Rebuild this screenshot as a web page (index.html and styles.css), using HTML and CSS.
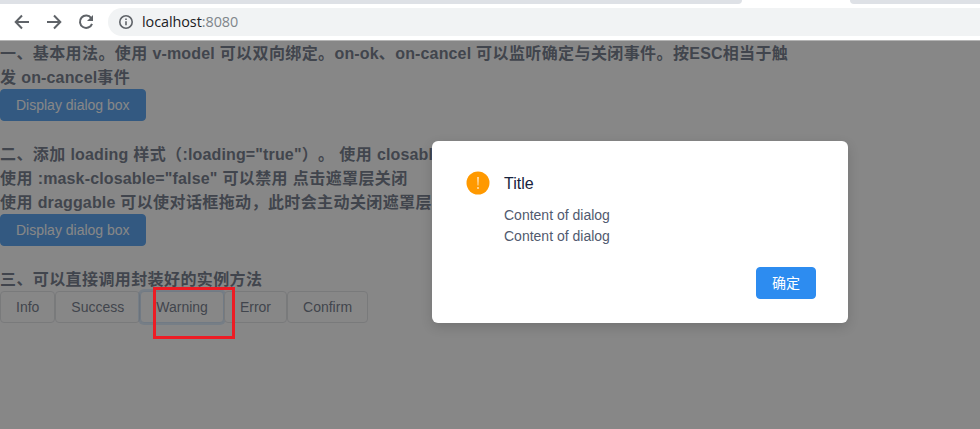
FILE: index.html
```html
<!DOCTYPE html>
<html lang="zh-CN">
<head>
<meta charset="utf-8">
<title>localhost:8080</title>
<link rel="stylesheet" href="styles.css">
</head>
<body>
<header class="chrome">
  <div class="tabs"><div class="tab tab-left"></div><div class="tab tab-right"></div></div>
  <div class="toolbar">
    <svg class="nav" viewBox="0 0 16 16"><path d="M15 8H2M8 1.5L1.7 8L8 14.5"/></svg>
    <svg class="nav" viewBox="0 0 16 16"><path d="M1 8H14M8 1.5L14.3 8L8 14.5"/></svg>
    <svg class="nav" viewBox="0 0 16 16"><path d="M13.2 4.1A6.2 6.2 0 1 0 14 9.8"/><path class="solid" d="M15 1V7H9Z"/></svg>
    <div class="address">
      <svg class="info" viewBox="0 0 14 14"><circle cx="7" cy="7" r="6.2"/><path d="M7 6.2V10.3M7 3.5V5"/></svg>
      <span class="url">localhost<span class="port">:8080</span></span>
    </div>
  </div>
</header>
<main class="page">
  <section class="demo">
    <h3>一、基本用法。使用 <b>v-model</b> 可以双向绑定。<b>on-ok</b>、<b>on-cancel</b> 可以监听确定与关闭事件。按<b>ESC</b>相当于触<br>发 <b>on-cancel</b>事件</h3>
    <button class="btn primary">Display dialog box</button>
  </section>
  <section class="demo">
    <h3>二、添加 <b>loading</b> 样式（<b>:loading="true"</b>）。 使用 <b>closable</b><br>使用 <b>:mask-closable="false"</b> 可以禁用 点击遮罩层关闭<br>使用 <b>draggable</b> 可以使对话框拖动，此时会主动关闭遮罩层</h3>
    <button class="btn primary">Display dialog box</button>
  </section>
  <section class="demo">
    <h3>三、可以直接调用封装好的实例方法</h3>
    <div class="buttons">
      <button class="btn">Info</button><button class="btn">Success</button><button class="btn focused">Warning</button><button class="btn">Error</button><button class="btn">Confirm</button>
    </div>
  </section>
</main>
<div class="mask"></div>
<div class="marker"></div>
<div class="modal">
  <div class="head">
    <svg class="warn" viewBox="0 0 24 24"><circle cx="12" cy="12" r="11.5"/><path d="M11.2 6H12.8L12.4 14.6H11.6Z"/><circle class="dot" cx="12" cy="17" r=".9"/></svg>
    <span class="title">Title</span>
  </div>
  <div class="content"><p>Content of dialog</p><p>Content of dialog</p></div>
  <div class="foot"><button class="btn primary ok">确定</button></div>
</div>
</body>
</html>
```
FILE: styles.css
```css
* { box-sizing: border-box; margin: 0; padding: 0; }
body {
  width: 980px; height: 429px; overflow: hidden; background: #fff; color: #515a6e;
  font: 14px/21px "Liberation Sans", "Noto Sans CJK SC", sans-serif;
}
.chrome { height: 41px; border-bottom: 1px solid #b4b4b4; background: #fff; }
.tabs { height: 4px; display: flex; justify-content: space-between; }
.tab { background: #dee1e6; }
.tab-left { width: 742px; border-bottom-right-radius: 5px; }
.tab-right { width: 130px; border-bottom-left-radius: 5px; }
.toolbar { display: flex; align-items: center; height: 36px; padding-left: 14px; }
.nav { width: 16px; height: 16px; margin-right: 16px; fill: none; stroke: #5f6368; stroke-width: 2; }
.nav:nth-child(3) { margin-right: 14px; }
.nav .solid { fill: #5f6368; stroke: none; }
.address {
  flex: 1; height: 28px; display: flex; align-items: center; padding-left: 11px;
  background: #f1f3f4; border-radius: 14px 0 0 14px;
}
.info { width: 14px; height: 14px; fill: none; stroke: #5f6368; stroke-width: 1.6; }
.url { margin-left: 9px; font: 14.4px/20px "Open Sans", "Noto Sans", sans-serif; letter-spacing: -.06px; color: #202124; }
.port { color: #80868b; }
.page { height: 388px; }
.demo { margin-bottom: 21px; }
h3 {
  padding-top: 1px; margin-bottom: -1px; font-size: 16px; line-height: 24px; font-weight: 700;
  letter-spacing: .4px; white-space: nowrap; text-spacing-trim: space-all;
}
h3 b { letter-spacing: .15px; }
.btn {
  display: block; position: relative; height: 32px; padding: 0 15px; border: 1px solid #dcdee2; border-radius: 4px;
  background: #fff; color: #515a6e; font: inherit; line-height: 30px; white-space: nowrap;
}
.primary { background: #2d8cf0; border-color: #2d8cf0; color: #fff; }
.buttons { display: flex; }
.focused { border-color: #c8dff8; box-shadow: 0 0 0 2px rgba(45, 140, 240, .2); }
.mask { position: absolute; inset: 41px 0 0; background: rgba(55, 55, 55, .6); }
.marker { position: absolute; left: 153px; top: 287px; width: 82px; height: 52px; border: 3px solid #ed1c24; }
.modal {
  position: absolute; left: 432px; top: 141px; width: 416px; height: 182px; padding: 30px 32px 24px 34px;
  display: flex; flex-direction: column; background: #fff; border-radius: 6px; box-shadow: 0 4px 12px rgba(0, 0, 0, .15);
}
.head { display: flex; align-items: center; height: 24px; }
.warn { width: 24px; height: 24px; fill: #f90; }
.warn path, .warn .dot { fill: #ffe9c8; }
.title { margin-left: 14px; font-size: 16px; color: #17233d; }
.content { margin: 10px 0 0 38px; }
.foot { display: flex; justify-content: flex-end; margin-top: auto; }
.ok { width: 60px; }
```
